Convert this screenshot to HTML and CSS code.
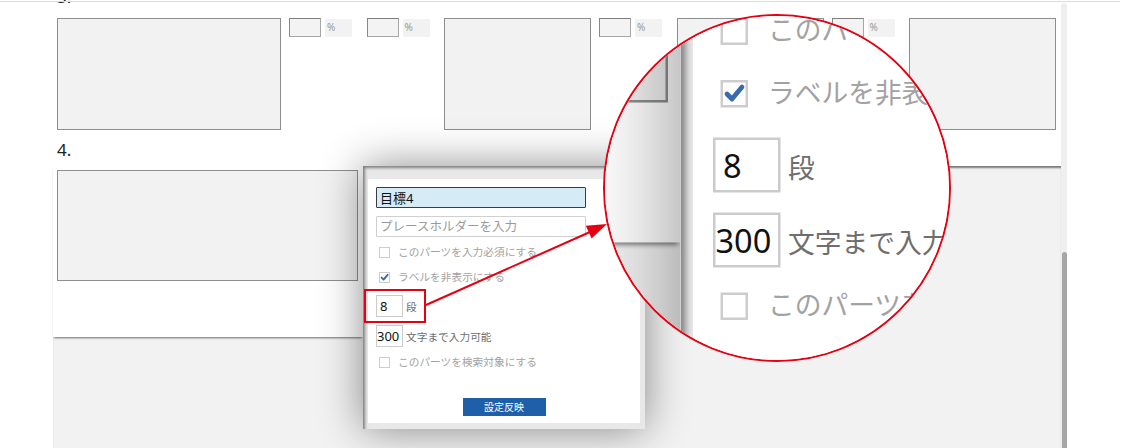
FILE: index.html
```html
<!DOCTYPE html>
<html lang="ja">
<head>
  <meta charset="UTF-8" />
  <title>パーツ設定</title>
  <link rel="stylesheet" href="styles.css">
</head>
<body>
  <div class="page">
    <div class="topline"></div>
    <div class="layout">
      <div class="sheet">
        <div class="num num-3">3.</div>
        <div class="row">
          <div class="box wide"></div>
          <div class="ratio"><span class="ratio-in"></span><span class="pct">%</span></div>
          <div class="ratio"><span class="ratio-in"></span><span class="pct">%</span></div>
          <div class="box"></div>
          <div class="ratio"><span class="ratio-in"></span><span class="pct">%</span></div>
          <div class="box"></div>
          <div class="ratio"><span class="ratio-in"></span><span class="pct">%</span></div>
          <div class="box"></div>
        </div>
        <div class="num num-4">4.</div>
        <div class="work">
          <div class="cell"><div class="box big"></div></div>
          <div class="popup">
            <div class="form">
              <div class="fields">
                <input class="text-in active" type="text" value="目標4" />
                <input class="text-in" type="text" placeholder="プレースホルダーを入力" />
                <label class="chk first"><span class="chk-box"></span>このパーツを入力必須にする</label>
                <label class="chk second">
                  <span class="chk-box">
                    <svg width="9" height="9" viewBox="0 0 9 9"><path d="M1.6 4.6 L3.6 6.6 L7.6 1.8" fill="none" stroke="#3a69ae" stroke-width="1.9" stroke-linecap="round" stroke-linejoin="round"/></svg>
                  </span>ラベルを非表示にする
                </label>
                <div class="num-row rows"><input class="num-in" type="text" value="8" /><span class="unit">段</span></div>
                <div class="num-row chars"><input class="num-in tight" type="text" value="300" /><span class="unit">文字まで入力可能</span></div>
                <label class="chk third"><span class="chk-box"></span>このパーツを検索対象にする</label>
              </div>
              <div class="btn-row"><button class="apply-btn">設定反映</button></div>
            </div>
          </div>
        </div>
      </div>
      <div class="scrollbar"><div class="thumb"></div></div>
    </div>
  </div>

  <div class="lens"></div>
  <div class="mark"></div>
  <svg class="arrow" width="1128" height="448" viewBox="0 0 1128 448">
    <line x1="426" y1="305" x2="590" y2="232" stroke="#e60012" stroke-width="2" />
    <polygon points="607,224 591.6,238.6 585.8,225.8" fill="#e60012" />
  </svg>

  <script>
    // 虫眼鏡の中身はページをそのまま複製して拡大する
    const page = document.querySelector('.page');
    const lens = document.querySelector('.lens');
    lens.appendChild(page.cloneNode(true));
  </script>
</body>
</html>
```

FILE: styles.css
```css
body {
  margin: 0;
  font-family: "Noto Sans", "Noto Sans CJK JP", sans-serif;
  background: #fff;
  position: relative;
  width: 1128px;
  height: 448px;
  overflow: hidden;
}

.page {
  position: relative;
  width: 1128px;
  height: 448px;
  overflow: hidden;
  background: #fff;
}

.topline {
  position: absolute;
  top: 1px;
  left: 0;
  width: 1120px;
  height: 1px;
  background: #dcdcdc;
  z-index: 3;
}

.layout {
  display: flex;
  height: 448px;
}

.sheet {
  display: flex;
  flex-direction: column;
  width: 1008px;
  margin-left: 53px;
  height: 448px;
}

.num {
  height: 20px;
  line-height: 20px;
  font-size: 17px;
  color: #222;
  padding-left: 4px;
}
.num-3 { margin-top: -13px; }
.num-4 { margin-top: 10px; }

.row {
  display: flex;
  align-items: flex-start;
  height: 112px;
  margin: 11px 0 0 4px;
}

.box {
  width: 147px;
  height: 112px;
  box-sizing: border-box;
  background: #f2f2f2;
  border: 1px solid #8e8e8e;
  margin-right: 8px;
  flex: none;
}
.box.wide { width: 224px; }
.box.big {
  width: 301px;
  height: 111px;
  margin: 0;
}

.ratio {
  display: flex;
  align-items: flex-start;
  margin-right: 14.5px;
}
.ratio-in {
  width: 32px;
  height: 19px;
  box-sizing: border-box;
  background: #f3f3f3;
  border: 1px solid #a6a6a6;
  border-top-color: #7e7e7e;
  border-left-color: #888;
}
.pct {
  width: 27px;
  height: 18px;
  margin: 1px 0 0 4px;
  box-sizing: border-box;
  padding-left: 2px;
  background: #f2f2f2;
  color: #999;
  font-size: 10px;
  line-height: 17px;
}

/* 下のグレー領域 */
.work {
  flex: 1;
  display: flex;
  align-items: flex-start;
  margin-top: 6px;
  background: #f2f2f2;
  box-shadow: inset 0 3px 2px -1px rgba(0, 0, 0, 0.5);
}

.cell {
  flex: none;
  width: 310px;
  height: 171px;
  box-sizing: border-box;
  padding: 4px 0 0 4px;
  background: #fff;
  box-shadow: 0 2px 2px -1px rgba(0, 0, 0, 0.55);
}

.popup {
  flex: none;
  position: relative;
  z-index: 1;
  width: 282px;
  height: 263px;
  box-sizing: border-box;
  padding: 13px 5px 6px;
  background: #e8e8e8;
  box-shadow: 0 0 40px rgba(0, 0, 0, 0.45), inset 3px 3px 3px -1px rgba(0, 0, 0, 0.45);
}

.form {
  height: 100%;
  box-sizing: border-box;
  padding-top: 8px;
  background: #fff;
}

.fields {
  display: flex;
  flex-direction: column;
  align-items: flex-start;
  padding: 0 8px;
}

.text-in {
  width: 210px;
  height: 21px;
  box-sizing: border-box;
  margin: 0 0 8px;
  padding: 0 3px;
  border: 1px solid #d0d0d0;
  border-radius: 1px;
  background: #fff;
  font-family: inherit;
  font-size: 12.5px;
  color: #111;
  outline: none;
}
.text-in.active {
  background: #d5ebf6;
  border-color: #3c3c3c;
  font-size: 13px;
}
.text-in::placeholder { color: #9a9a9a; }

.chk {
  display: flex;
  align-items: center;
  height: 11px;
  margin-left: 3px;
  font-size: 10.7px;
  line-height: 11px;
  color: #a2a2a2;
  white-space: nowrap;
}
.chk.first { margin-top: 2px; }
.chk.second { margin-top: 14px; }
.chk.third { margin-top: 10px; }

.chk-box {
  width: 11px;
  height: 11px;
  box-sizing: border-box;
  margin-right: 8px;
  border: 1px solid #cdcdcd;
  background: #fff;
  display: flex;
  align-items: center;
  justify-content: center;
}

.num-row {
  display: flex;
  align-items: center;
  height: 22px;
}
.num-row.rows { margin-top: 12px; }
.num-row.chars { margin-top: 8px; }

.num-in {
  width: 27px;
  height: 22px;
  box-sizing: border-box;
  margin: 0;
  padding: 0 3px;
  border: 1px solid #cbcbcb;
  background: #fff;
  font-family: inherit;
  font-size: 13px;
  color: #111;
  outline: none;
}
.num-in.tight { padding: 0; }

.unit {
  margin-left: 3px;
  font-size: 10.7px;
  color: #6e6e6e;
  white-space: nowrap;
}

.btn-row {
  display: flex;
  justify-content: center;
  margin-top: 30px;
}

.apply-btn {
  width: 83px;
  height: 18px;
  padding: 0;
  border: none;
  background: #1f5ea9;
  color: #fff;
  font-family: inherit;
  font-size: 10px;
  line-height: 18px;
}

.scrollbar {
  width: 6px;
  height: 445px;
  margin-top: 3px;
  background: #efefef;
  border-radius: 3px 3px 0 0;
}
.thumb {
  width: 5px;
  height: 200px;
  margin: 249px 0 0 1px;
  background: #a6a6a6;
  border-radius: 3px 3px 0 0;
}

/* 注釈 */
.mark {
  position: absolute;
  left: 364px;
  top: 289px;
  width: 62px;
  height: 34px;
  box-sizing: border-box;
  border: 2px solid #e60012;
  z-index: 4;
}

.arrow {
  position: absolute;
  left: 0;
  top: 0;
  z-index: 6;
  pointer-events: none;
}

.lens {
  position: absolute;
  left: 603px;
  top: 14px;
  width: 348px;
  height: 348px;
  box-sizing: border-box;
  border: 2px solid #e60012;
  border-radius: 50%;
  overflow: hidden;
  background: #fff;
  z-index: 5;
}
.lens .page {
  position: absolute;
  left: -832px;
  top: -616.5px;
  transform: scale(2.5);
  transform-origin: 0 0;
}
```
